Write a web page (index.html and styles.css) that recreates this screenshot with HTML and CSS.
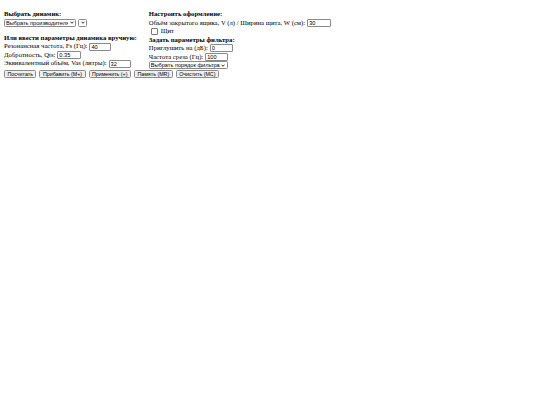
FILE: index.html
```html
<!DOCTYPE html>
<html lang="ru">
<head>
<meta charset="utf-8">
<title>Калькулятор динамика</title>
<link rel="stylesheet" href="styles.css">
</head>
<body>
<div class="panels">
  <div class="col col-left">
    <div class="line"><b>Выбрать динамик:</b></div>
    <div class="line">
      <select class="sel sel-maker"><option>Выбрать производителя</option></select>
      <select class="sel sel-model"><option></option></select>
    </div>
    <div class="spacer"></div>
    <div class="line"><b>Или ввести параметры динамика вручную:</b></div>
    <div class="line">Резонансная частота, Fs (Гц): <input type="text" class="num w22" value="40"></div>
    <div class="line">Добротность, Qts: <input type="text" class="num w24" value="0.35"></div>
    <div class="line">Эквивалентный объём, Vas (литры): <input type="text" class="num w22" value="32"></div>
  </div>
  <div class="col col-right">
    <div class="line"><b>Настроить оформление:</b></div>
    <div class="line">Объём закрытого ящика, V (л) / Ширина щита, W (см): <input type="text" class="num w24" value="30"></div>
    <div class="line"><label class="chk-label"><span class="chk"></span>Щит</label></div>
    <div class="line"><b>Задать параметры фильтра:</b></div>
    <div class="line">Приглушить на (дБ): <input type="text" class="num w23" value="0"></div>
    <div class="line">Частота среза (Гц): <input type="text" class="num w23" value="100"></div>
    <div class="line"><select class="sel sel-order"><option>Выбрать порядок фильтра</option></select></div>
  </div>
</div>
<div class="buttons">
  <button class="btn">Посчитать</button>
  <button class="btn">Прибавить (M+)</button>
  <button class="btn">Применить (+)</button>
  <button class="btn">Память (MR)</button>
  <button class="btn">Очистить (MC)</button>
</div>
</body>
</html>
```
FILE: styles.css
```css
html {
  background: #fff;
}
body {
  margin: 0;
  padding: 10px 4px 0 4px;
  font-family: "Liberation Serif", "Times New Roman", serif;
  font-size: 6.7px;
  color: #000;
}
.panels {
  display: flex;
  gap: 12px;
  align-items: flex-start;
}
.col {
  display: flex;
  flex-direction: column;
}
.line {
  height: 8.5px;
  line-height: 8.5px;
  white-space: nowrap;
  display: flex;
  align-items: center;
}
.spacer {
  height: 6.8px;
}
.num {
  font-family: "Liberation Sans", Arial, sans-serif;
  font-size: 5.6px;
  height: 8px;
  padding: 0 1px;
  margin: 0 0 0 2px;
  box-sizing: border-box;
  border: 1px solid #8a8a8a;
  border-radius: 1px;
  background: #fff;
  color: #000;
  outline: none;
}
.w22 { width: 22px; }
.w23 { width: 23px; }
.w24 { width: 24px; }
.sel {
  appearance: none;
  -webkit-appearance: none;
  font-family: "Liberation Sans", Arial, sans-serif;
  font-size: 5.6px;
  height: 8px;
  line-height: 6px;
  padding: 0 7px 0 1px;
  margin: 0;
  box-sizing: border-box;
  border: 1px solid #8a8a8a;
  border-radius: 1.5px;
  background: #fff url("data:image/svg+xml,%3Csvg xmlns='http://www.w3.org/2000/svg' width='6' height='4' viewBox='0 0 6 4'%3E%3Cpath d='M0.8 0.8 L3 3.2 L5.2 0.8' fill='none' stroke='%23000' stroke-width='1.2'/%3E%3C/svg%3E") no-repeat right 1.5px center / 4px 3px;
  color: #000;
}
.sel-maker { width: 72px; }
.sel-model { width: 9px; margin-left: 2px; padding: 0; }
.sel-order { width: 79px; }
.chk-label {
  display: flex;
  align-items: center;
}
.chk {
  display: inline-block;
  width: 5px;
  height: 5px;
  border: 1px solid #777;
  border-radius: 1px;
  background: #fff;
  margin: 0 3px 0 2px;
}
.buttons {
  display: flex;
  gap: 3px;
  margin-top: 0.5px;
}
.btn {
  font-family: "Liberation Sans", Arial, sans-serif;
  font-size: 5.3px;
  height: 8px;
  line-height: 6px;
  padding: 0 2.5px;
  margin: 0;
  box-sizing: border-box;
  border: 1px solid #8a8a8a;
  border-radius: 1.5px;
  background: #efefef;
  color: #000;
}
```
